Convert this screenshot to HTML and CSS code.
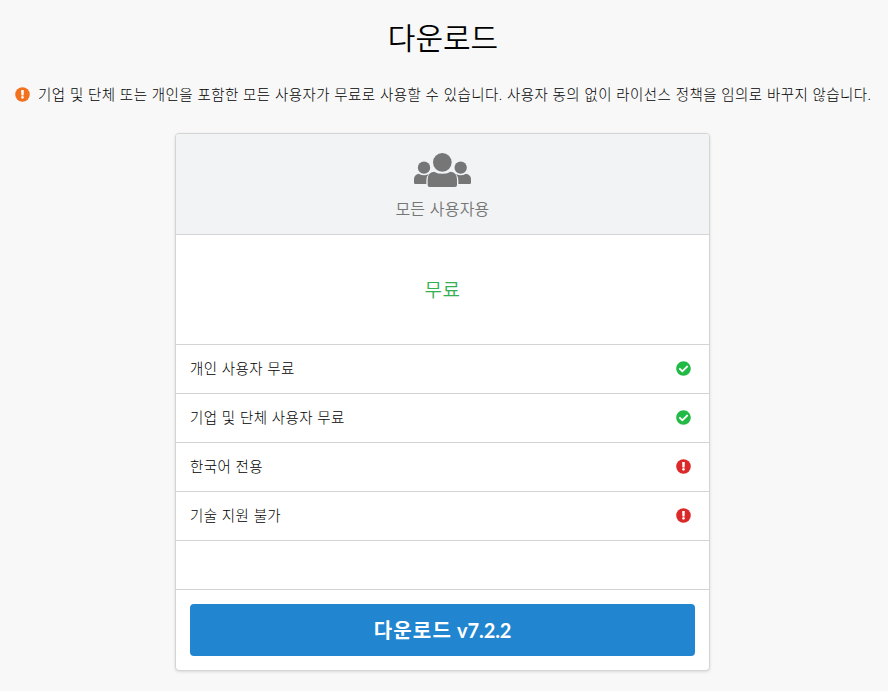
FILE: index.html
```
<!DOCTYPE html>
<html lang="ko">

<head>
    <meta charset="UTF-8">
    <meta name="viewport" content="width=device-width, initial-scale=1.0">
    <title>다운로드</title>
    <link rel="stylesheet" href="styles.css">
</head>

<body>
    <!-- 아이콘 -->
    <svg class="sprite" xmlns="http://www.w3.org/2000/svg">
        <symbol id="icon-check" viewBox="0 0 512 512">
            <path d="M504 256c0 136.967-111.033 248-248 248S8 392.967 8 256 119.033 8 256 8s248 111.033 248 248zM227.314 387.314l184-184c6.248-6.248 6.248-16.379 0-22.627l-22.627-22.627c-6.248-6.249-16.379-6.249-22.628 0L216 308.118l-70.059-70.059c-6.248-6.248-16.379-6.248-22.628 0l-22.627 22.627c-6.248 6.248-6.248 16.379 0 22.627l104 104c6.249 6.249 16.379 6.249 22.628.001z"/>
        </symbol>
        <symbol id="icon-alert" viewBox="0 0 512 512">
            <circle cx="256" cy="256" r="248"/>
            <path fill="#fff" d="M210 112q-1-12 11-12h70q12 0 11 12l-8 170q-1 10-11 10h-54q-10 0-11-10z"/>
            <circle cx="256" cy="354" r="44" fill="#fff"/>
        </symbol>
    </svg>

    <h1 class="title">다운로드</h1>
    <p class="notice">
        <svg class="icon orange"><use href="#icon-alert"/></svg>
        <span>기업 및 단체 또는 개인을 포함한 모든 사용자가 무료로 사용할 수 있습니다. 사용자 동의 없이 라이선스 정책을 임의로 바꾸지 않습니다.</span>
    </p>

    <div class="card">
        <div class="card-header">
            <svg class="users" viewBox="88 24 171 102">
                <circle cx="118" cy="68" r="18.5"/>
                <circle cx="228" cy="68" r="18.5"/>
                <path d="M102 86q16 9 30 1q-7 8-7 18v12H92q-4 0-4-4v-10q0-14 14-17z"/>
                <path d="M244 86q-16 9-30 1q7 8 7 18v12h34q4 0 4-4v-10q0-14-15-17z"/>
                <circle cx="173" cy="52" r="28"/>
                <path d="M148 80q25 13 50 0q19 2 19 23v17q0 6-6 6h-76q-6 0-6-6v-17q0-21 19-23z"/>
            </svg>
            <div class="card-name">모든 사용자용</div>
        </div>
        <div class="price">무료</div>
        <ul class="features">
            <li>
                <span>개인 사용자 무료</span>
                <svg class="icon green"><use href="#icon-check"/></svg>
            </li>
            <li>
                <span>기업 및 단체 사용자 무료</span>
                <svg class="icon green"><use href="#icon-check"/></svg>
            </li>
            <li>
                <span>한국어 전용</span>
                <svg class="icon red"><use href="#icon-alert"/></svg>
            </li>
            <li>
                <span>기술 지원 불가</span>
                <svg class="icon red"><use href="#icon-alert"/></svg>
            </li>
            <li></li>
        </ul>
        <div class="card-footer">
            <a class="button" href="#">다운로드 <span class="version">v7.2.2</span></a>
        </div>
    </div>
</body>

</html>
```
FILE: styles.css
```
* {
    margin: 0;
    padding: 0;
    box-sizing: border-box;
}

body {
    height: 691px;
    padding-top: 12px;
    background-color: #f8f8f8;
    color: #000;
    font-family: Lato, "Noto Sans CJK KR", sans-serif;
    font-size: 14.5px;
    font-weight: 300;
    overflow: hidden;
}

.sprite {
    display: none;
}

.title {
    height: 50px;
    line-height: 50px;
    font-size: 30px;
    font-weight: 350;
    text-align: center;
    padding-right: 2px;
}

.notice {
    display: flex;
    align-items: center;
    height: 20px;
    margin: 22px 0 29px 15px;
    line-height: 20px;
    letter-spacing: .42px;
    white-space: nowrap;
}

.notice span {
    margin-left: 8px;
    padding-top: 2px;
}

.icon {
    width: 15px;
    height: 15px;
    flex-shrink: 0;
}

.orange {
    fill: #f2711c;
}

.green {
    fill: #21ba45;
}

.red {
    fill: #db2828;
}

.card {
    width: 535px;
    margin-left: 175px;
    background-color: #fff;
    border: 1px solid #d4d4d5;
    border-radius: 4px;
    box-shadow: 0 1px 3px rgba(0, 0, 0, .12);
}

.card-header {
    height: 101px;
    padding-top: 19px;
    background-color: #f1f3f5;
    border-bottom: 1px solid #d4d4d5;
    border-radius: 3px 3px 0 0;
    color: #767676;
    text-align: center;
}

.users {
    display: block;
    width: 57px;
    height: 34px;
    margin: 0 auto;
    fill: #767676;
}

.card-name {
    margin-top: 11px;
    font-size: 16px;
    font-weight: 350;
    line-height: 22px;
    letter-spacing: .2px;
}

.price {
    height: 109px;
    line-height: 109px;
    color: #34b052;
    font-size: 19px;
    font-weight: 350;
    letter-spacing: .5px;
    text-align: center;
}

.features {
    list-style: none;
}

.features li {
    display: flex;
    align-items: center;
    justify-content: space-between;
    height: 49px;
    padding: 0 18px 2px 14px;
    border-top: 1px solid #d4d4d5;
    letter-spacing: .4px;
}

.features span {
    line-height: 20px;
    padding-top: 1px;
}

.card-footer {
    padding: 14px;
    border-top: 1px solid #d4d4d5;
}

.button {
    display: block;
    height: 52px;
    line-height: 52px;
    background-color: #2185d0;
    border-radius: 4px;
    color: #fff;
    font-size: 20px;
    font-weight: 700;
    letter-spacing: 1.2px;
    text-align: center;
    text-decoration: none;
}

.version {
    margin-left: -1px;
    letter-spacing: -.1px;
}
```
